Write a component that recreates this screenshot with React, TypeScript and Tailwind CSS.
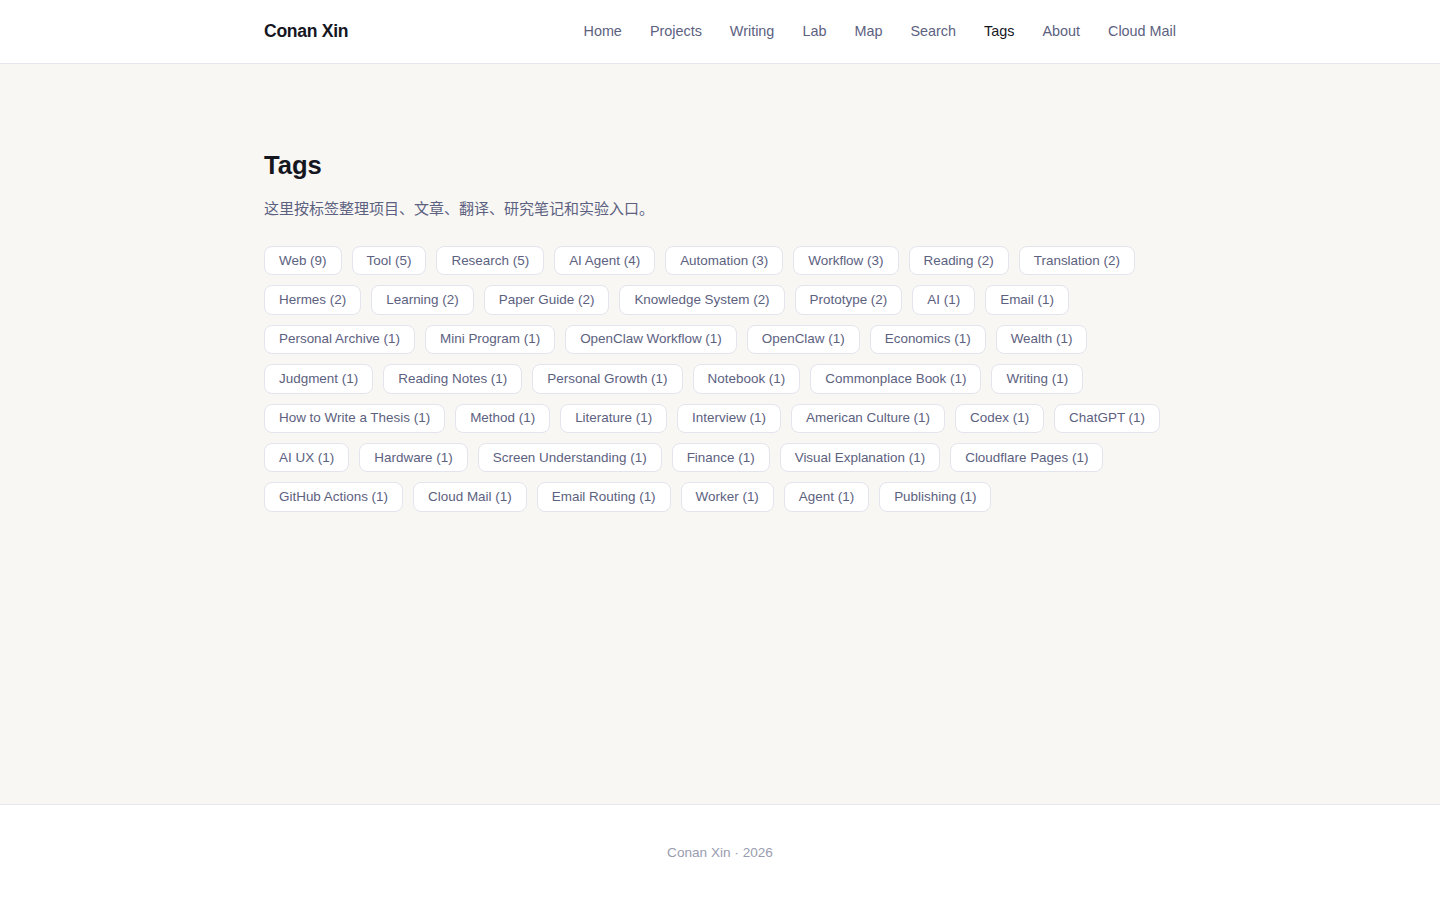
import React from "react";

const navItems = ["Home", "Projects", "Writing", "Lab", "Map", "Search", "Tags", "About", "Cloud Mail"];

const tags: [string, number][] = [
  ["Web", 9],
  ["Tool", 5],
  ["Research", 5],
  ["AI Agent", 4],
  ["Automation", 3],
  ["Workflow", 3],
  ["Reading", 2],
  ["Translation", 2],
  ["Hermes", 2],
  ["Learning", 2],
  ["Paper Guide", 2],
  ["Knowledge System", 2],
  ["Prototype", 2],
  ["AI", 1],
  ["Email", 1],
  ["Personal Archive", 1],
  ["Mini Program", 1],
  ["OpenClaw Workflow", 1],
  ["OpenClaw", 1],
  ["Economics", 1],
  ["Wealth", 1],
  ["Judgment", 1],
  ["Reading Notes", 1],
  ["Personal Growth", 1],
  ["Notebook", 1],
  ["Commonplace Book", 1],
  ["Writing", 1],
  ["How to Write a Thesis", 1],
  ["Method", 1],
  ["Literature", 1],
  ["Interview", 1],
  ["American Culture", 1],
  ["Codex", 1],
  ["ChatGPT", 1],
  ["AI UX", 1],
  ["Hardware", 1],
  ["Screen Understanding", 1],
  ["Finance", 1],
  ["Visual Explanation", 1],
  ["Cloudflare Pages", 1],
  ["GitHub Actions", 1],
  ["Cloud Mail", 1],
  ["Email Routing", 1],
  ["Worker", 1],
  ["Agent", 1],
  ["Publishing", 1],
];

const App = () => {
  return (
    <div className="min-h-screen flex flex-col bg-[#f8f7f4] font-['Liberation_Sans','Noto_Sans_CJK_SC',sans-serif]">
      {/* header */}
      <header className="bg-white border-b border-[#e6e6ec]">
        <div className="w-[912px] mx-auto h-[63px] flex items-center justify-between">
          <a className="text-[17.6px] font-bold text-[#16161f] tracking-[-0.3px]">Conan Xin</a>
          <nav className="flex items-center gap-[28px] text-[14.4px]">
            {navItems.map((item) => (
              <a key={item} className={item === "Tags" ? "text-[#16161f]" : "text-[#5c6180]"}>
                {item}
              </a>
            ))}
          </nav>
        </div>
      </header>

      <main className="flex-1">
        <div className="w-[912px] mx-auto pt-[86px]">
          <h1 className="text-[25.6px] leading-[31px] font-bold text-[#16161f]">Tags</h1>
          <p className="mt-[16px] text-[15px] leading-[24px] text-[#5c6180]">
            这里按标签整理项目、文章、翻译、研究笔记和实验入口。
          </p>
          <div className="mt-[25px] flex flex-wrap gap-x-[10px] gap-y-[10px] w-[912px]">
            {tags.map(([name, count]) => (
              <a
                key={name}
                className="h-[29.4px] px-[14px] flex items-center bg-white border border-[#e4e4ee] rounded-[8px] text-[13.44px] text-[#5c6180] whitespace-nowrap"
              >
                {name} ({count})
              </a>
            ))}
          </div>
        </div>
      </main>

      <footer className="bg-white border-t border-[#e6e6ec] h-[96px] pt-[2px] flex items-center justify-center">
        <span className="text-[13.6px] text-[#9a9cb0]">Conan Xin · 2026</span>
      </footer>
    </div>
  );
};

export default App;
